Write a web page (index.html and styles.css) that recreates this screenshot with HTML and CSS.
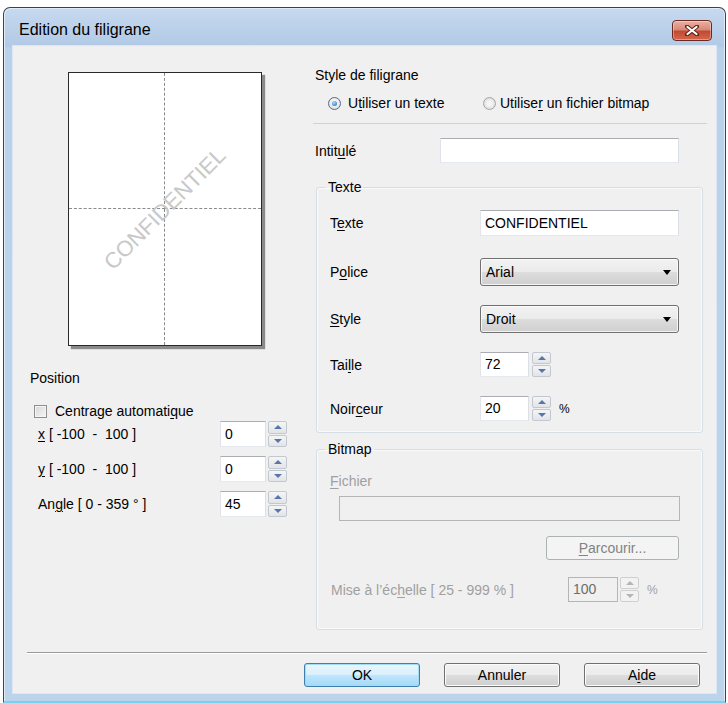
FILE: index.html
```html
<!DOCTYPE html>
<html lang="fr">
<head>
	<meta charset="UTF-8">
	<title>Edition du filigrane</title>
	<link rel="stylesheet" href="styles.css">
</head>
<body>
	<div class="window">
		<div class="titlebar">
			<span class="title">Edition du filigrane</span>
			<button class="close">
				<svg width="14" height="11" viewBox="0 0 14 11">
					<path d="M2 1.5 L12 9.5 M12 1.5 L2 9.5" stroke="#5a231b" stroke-width="4" stroke-linecap="round"/>
					<path d="M2.5 2 L11.5 9 M11.5 2 L2.5 9" stroke="#fff" stroke-width="2.2" stroke-linecap="round"/>
				</svg>
			</button>
		</div>

		<div class="client">
			<div class="main">
				<!-- colonne de gauche : apercu + position -->
				<div class="left">
					<div class="preview">
						<div class="quad q1"></div>
						<div class="quad q2"></div>
						<div class="quad q3"></div>
						<div class="quad"></div>
						<span class="mark">CONFIDENTIEL</span>
					</div>
					<div class="pos-title">Position</div>
					<label class="check"><span class="box"></span><span>Centrage automati<u>q</u>ue</span></label>
					<div class="pos-rows">
						<div class="prow">
							<span class="plbl"><u>x</u> [ -100 &nbsp;- &nbsp;100 ]</span>
							<div class="spin">
								<div class="num w46">0</div>
								<div class="spinbtn"><span class="sb"><i class="up"></i></span><span class="sb"><i class="dn"></i></span></div>
							</div>
						</div>
						<div class="prow">
							<span class="plbl"><u>y</u> [ -100 &nbsp;- &nbsp;100 ]</span>
							<div class="spin">
								<div class="num w46">0</div>
								<div class="spinbtn"><span class="sb"><i class="up"></i></span><span class="sb"><i class="dn"></i></span></div>
							</div>
						</div>
						<div class="prow">
							<span class="plbl">An<u>g</u>le [ 0 - 359 ° ]</span>
							<div class="spin">
								<div class="num w46">45</div>
								<div class="spinbtn"><span class="sb"><i class="up"></i></span><span class="sb"><i class="dn"></i></span></div>
							</div>
						</div>
					</div>
				</div>

				<!-- colonne de droite -->
				<div class="right">
					<div class="heading">Style de filigrane</div>
					<div class="radios">
						<span class="ritem first"><span class="radio on"></span><span>U<u>t</u>iliser un texte</span></span>
						<span class="ritem"><span class="radio"></span><span>Utilise<u>r</u> un fichier bitmap</span></span>
					</div>
					<div class="sep"></div>
					<div class="intitule">
						<span class="ilbl">Intit<u>u</u>lé</span>
						<div class="edit w239"></div>
					</div>

					<fieldset class="group">
						<legend>Texte</legend>
						<div class="grows">
							<div class="grow first">
								<span class="glbl">T<u>e</u>xte</span>
								<div class="edit w199 h26">CONFIDENTIEL</div>
							</div>
							<div class="grow">
								<span class="glbl">P<u>o</u>lice</span>
								<div class="combo"><span>Arial</span><i class="arrow"></i></div>
							</div>
							<div class="grow">
								<span class="glbl"><u>S</u>tyle</span>
								<div class="combo"><span>Droit</span><i class="arrow"></i></div>
							</div>
							<div class="grow">
								<span class="glbl">Tai<u>l</u>le</span>
								<div class="spin wide">
									<div class="num w49">72</div>
									<div class="spinbtn"><span class="sb"><i class="up"></i></span><span class="sb"><i class="dn"></i></span></div>
								</div>
							</div>
							<div class="grow">
								<span class="glbl">Noir<u>c</u>eur</span>
								<div class="spin wide">
									<div class="num w49">20</div>
									<div class="spinbtn"><span class="sb"><i class="up"></i></span><span class="sb"><i class="dn"></i></span></div>
								</div>
								<span class="pct">%</span>
							</div>
						</div>
					</fieldset>

					<fieldset class="group bitmap">
						<legend>Bitmap</legend>
						<div class="dis flbl"><u>F</u>ichier</div>
						<div class="edit off w341"></div>
						<div class="btn off browse"><span><u>P</u>arcourir...</span></div>
						<div class="mrow">
							<span class="dis mlbl">Mise à l’éc<u>h</u>elle [ 25 - 999 % ]</span>
							<div class="spin">
								<div class="num off w50">100</div>
								<div class="spinbtn off"><span class="sb"><i class="up"></i></span><span class="sb"><i class="dn"></i></span></div>
							</div>
							<span class="pct dis">%</span>
						</div>
					</fieldset>
				</div>
			</div>

			<div class="footer">
				<div class="fline"></div>
				<div class="buttons">
					<div class="btn ok">OK</div>
					<div class="btn">Annuler</div>
					<div class="btn"><span>A<u>i</u>de</span></div>
				</div>
			</div>
		</div>
	</div>
</body>
</html>
```

FILE: styles.css
```css
*{
	margin: 0;
	padding: 0;
	box-sizing: border-box;
}
body{
	background: #fff;
	font-family: "Liberation Sans", Arial, sans-serif;
	font-size: 14px;
	color: #000;
	overflow: hidden;
}
u{
	text-underline-offset: 2px;
}

/* cadre de la fenetre */
.window{
	margin: 7px 0 0 3px;
	width: 723px;
	height: 696px;
	border: 1px solid #3c434d;
	border-bottom: 2px solid #74d3f0;
	border-radius: 7px 7px 0 0;
	background: linear-gradient(#c6d9ef, #b2cae6 38px, #b9d1ea 40px, #bcd3ec);
	box-shadow: inset 1px 1px 0 #e2ecf8, inset -1px 0 0 #e2ecf8;
	padding: 0 9px 8px 9px;
	display: flex;
	flex-direction: column;
}
.titlebar{
	height: 38px;
	display: flex;
	justify-content: space-between;
	padding: 0 4px 0 6px;
}
.title{
	font-size: 16px;
	line-height: 20px;
	margin-top: 12px;
	color: #000;
}
.close{
	width: 40px;
	height: 21px;
	margin-top: 12px;
	border: 1px solid #6b2a21;
	border-radius: 4px;
	background: linear-gradient(#eab0a3, #d88a78 45%, #c24a33 55%, #d4674c);
	box-shadow: inset 0 0 0 1px rgba(255,255,255,.35);
	display: flex;
	align-items: center;
	justify-content: center;
}

.client{
	flex: 1;
	background: #f0f0f0;
	box-shadow: 0 0 0 1px #dce7f3;
	display: flex;
	flex-direction: column;
}
.main{
	height: 606px;
	display: flex;
}

/* gauche */
.left{
	width: 300px;
}
.preview{
	margin: 26px 0 0 55px;
	width: 194px;
	height: 274px;
	border: 1px solid #2a2a2a;
	background: #fff;
	box-shadow: 3px 3px 1px #8a8a8a;
	display: grid;
	grid-template-columns: 1fr 1fr;
	grid-template-rows: 1fr 1fr;
	position: relative;
}
.q1{
	border-right: 1px dashed #8a8a8a;
	border-bottom: 1px dashed #8a8a8a;
}
.q2{
	border-bottom: 1px dashed #8a8a8a;
}
.q3{
	border-right: 1px dashed #8a8a8a;
}
.mark{
	position: absolute;
	left: 50%;
	top: 50%;
	transform: translate(-50%, -50%) rotate(-45deg);
	color: #c8c8c8;
	font-size: 22px;
	white-space: nowrap;
}
.pos-title{
	margin: 24px 0 0 17px;
	line-height: 16px;
}
.check{
	display: flex;
	align-items: center;
	gap: 8px;
	margin: 17px 0 0 21px;
	line-height: 16px;
}
.box{
	width: 13px;
	height: 13px;
	border: 1px solid #8e8f8f;
	background: linear-gradient(135deg, #d7d7d7, #f6f6f6);
	box-shadow: inset 0 0 0 1px #f4f4f4;
}
.pos-rows{
	margin-top: 2px;
	display: flex;
	flex-direction: column;
	gap: 9px;
}
.prow{
	display: flex;
	align-items: center;
	height: 26px;
	padding-left: 25px;
}
.plbl{
	width: 182px;
}

/* champs */
.edit, .num{
	height: 25px;
	background: #fff;
	border: 1px solid;
	border-color: #abadb3 #dbdfe6 #e3e9ef #e2e3ea;
	padding: 0 4px;
	line-height: 23px;
}
.h26{ height: 26px; line-height: 24px; }
.w46{ width: 46px; height: 26px; line-height: 24px; }
.w49{ width: 49px; }
.w50{ width: 50px; }
.w199{ width: 199px; }
.w239{ width: 239px; }
.w341{ width: 341px; }
.spin{
	display: flex;
	gap: 2px;
}
.spin.wide{
	gap: 3px;
}
.spinbtn{
	width: 19px;
	display: flex;
	flex-direction: column;
	gap: 1px;
}
.sb{
	flex: 1;
	border: 1px solid #c2c8d0;
	border-radius: 2px;
	background: linear-gradient(#f5f5f5, #e2e4e7);
	display: flex;
	align-items: center;
	justify-content: center;
}
.up{
	border-left: 4px solid transparent;
	border-right: 4px solid transparent;
	border-bottom: 4px solid #5676ad;
}
.dn{
	border-left: 4px solid transparent;
	border-right: 4px solid transparent;
	border-top: 4px solid #5676ad;
}
.spinbtn.off .up{ border-bottom-color: #b5b5b5; }
.spinbtn.off .dn{ border-top-color: #b5b5b5; }
.spinbtn.off .sb{ border-color: #d0d0d0; background: #f2f2f2; }

/* droite */
.right{
	width: 394px;
	padding-top: 21px;
}
.heading{
	line-height: 16px;
	padding-left: 2px;
}
.radios{
	display: flex;
	margin-top: 12px;
	padding-left: 15px;
	line-height: 16px;
}
.ritem{
	display: flex;
	align-items: center;
	gap: 4px;
}
.ritem.first{
	width: 155px;
	gap: 7px;
}
.radio{
	width: 13px;
	height: 13px;
	border-radius: 50%;
	border: 1px solid #8b8d90;
	background: radial-gradient(circle at 50% 40%, #ffffff, #d8d8d8);
	display: flex;
	align-items: center;
	justify-content: center;
}
.radio.on{
	border-color: #4d6c91;
}
.radio.on::after{
	content: "";
	width: 5px;
	height: 5px;
	border-radius: 50%;
	background: radial-gradient(circle at 40% 35%, #a6dcff, #1c5fb0);
}
.radio:not(.on){
	border-color: #a6a6a6;
	background: radial-gradient(circle, #f4f4f4 30%, #cfcfcf);
}
.sep{
	margin-top: 12px;
	border-top: 1px solid #d2d2d2;
}
.intitule{
	margin-top: 14px;
	display: flex;
	align-items: center;
}
.ilbl{
	width: 127px;
	padding-left: 2px;
}

.group{
	margin: 16px 0 0 3px;
	width: 387px;
	border: 1px solid #d5dfe5;
	border-radius: 3px;
	box-shadow: inset 0 0 0 1px #fafafa;
	padding: 15px 12px 11px 12px;
}
.group legend{
	margin-left: -3px;
	padding: 0 2px;
	line-height: 16px;
}
.grows{
	display: flex;
	flex-direction: column;
	gap: 19px;
}
.grow{
	display: flex;
	align-items: center;
}
.grow.first{
	margin-bottom: 3px;
}
.glbl{
	width: 151px;
	padding-left: 1px;
}
.combo{
	width: 199px;
	height: 28px;
	border: 1px solid #707070;
	border-radius: 3px;
	background: linear-gradient(#f2f2f2, #ebebeb 50%, #dddddd 50%, #cfcfcf);
	box-shadow: inset 0 0 0 1px rgba(255,255,255,.75);
	padding: 0 5px;
	display: flex;
	align-items: center;
	justify-content: space-between;
}
.arrow{
	margin-right: 2px;
	border-left: 4px solid transparent;
	border-right: 4px solid transparent;
	border-top: 5px solid #000;
}
.pct{
	margin-left: 8px;
	font-size: 12px;
}

.bitmap{
	margin-top: 8px;
	padding: 16px 12px 27px 12px;
}
.dis{
	color: #a0a0a0;
}
.flbl{
	line-height: 16px;
	padding-left: 1px;
}
.edit.off{
	margin: 7px 0 0 10px;
	background: #f0f0f0;
	border-color: #b5b5b5;
}
.num.off{
	background: #f0f0f0;
	border-color: #b5b5b5;
	color: #6d6d6d;
}
.browse{
	margin: 15px 0 0 217px;
	width: 133px;
	height: 27px;
}
.mrow{
	margin-top: 17px;
	display: flex;
	align-items: center;
}
.mlbl{
	width: 239px;
	padding-left: 2px;
}

/* boutons */
.btn{
	height: 24px;
	border: 1px solid #707070;
	border-radius: 3px;
	background: linear-gradient(#f2f2f2, #ebebeb 50%, #dddddd 50%, #cfcfcf);
	box-shadow: inset 0 0 0 1px #fcfcfc;
	display: flex;
	align-items: center;
	justify-content: center;
}
.btn.off{
	border-color: #adb2b5;
	background: #f4f4f4;
	box-shadow: none;
	color: #838383;
}
.btn.ok{
	border-color: #3c7fb1;
	background: linear-gradient(#eaf6fd, #d9f0fc 50%, #bee6fd 50%, #a7d9f5);
	box-shadow: inset 0 0 0 1px #a2dbf5;
}
.footer{
	display: flex;
	flex-direction: column;
}
.fline{
	margin: 0 9px 0 14px;
	border-top: 1px solid #9a9a9a;
	border-bottom: 1px solid #fff;
}
.buttons{
	margin-top: 9px;
	display: flex;
	justify-content: flex-end;
	gap: 24px;
	padding-right: 16px;
}
.buttons .btn{
	width: 116px;
}
```
